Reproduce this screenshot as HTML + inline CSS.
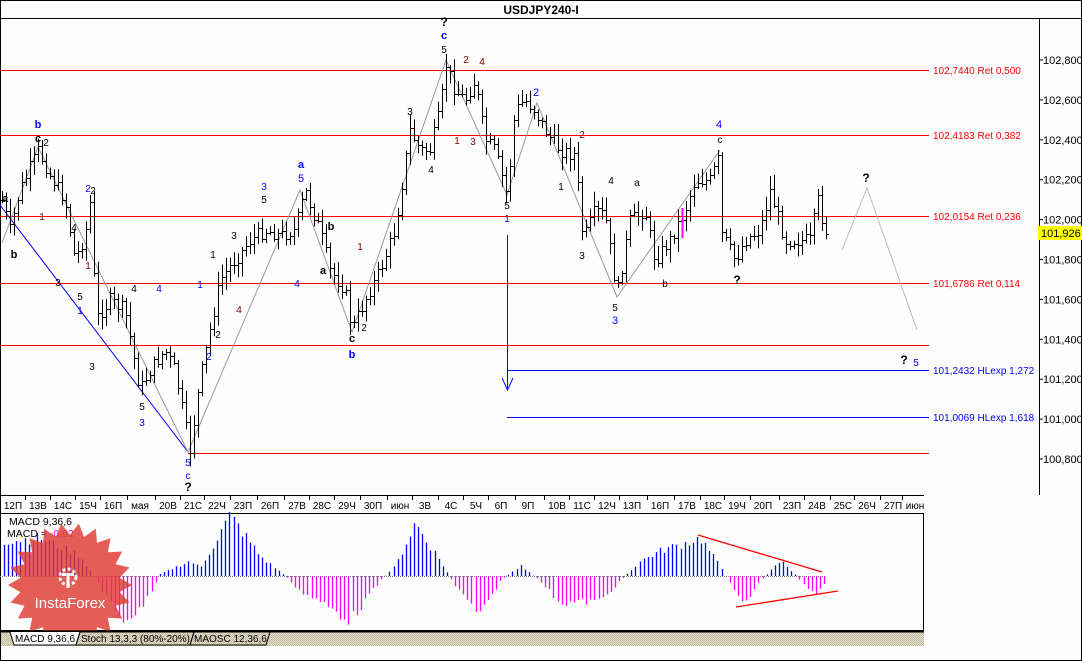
<!DOCTYPE html>
<html><head><meta charset="utf-8"><style>
html,body{margin:0;padding:0;background:#fff}
svg{display:block;font-family:"Liberation Sans","DejaVu Sans",sans-serif}
</style></head><body>
<svg id="s" width="1082" height="661" viewBox="0 0 1082 661" xmlns="http://www.w3.org/2000/svg">
<defs>
<pattern id="hatch" width="2" height="2" patternUnits="userSpaceOnUse"><rect width="2" height="2" fill="#e6e2d0"/><rect width="1" height="1" fill="#bdb89c"/><rect x="1" y="1" width="1" height="1" fill="#bdb89c"/></pattern>
</defs>
<rect x="0" y="0" width="1082" height="661" fill="#fcfdfc"/>
<rect x="0.5" y="0.5" width="1081" height="660" fill="none" stroke="#000"/>
<line x1="0" y1="18.5" x2="1082" y2="18.5" stroke="#000"/>
<text x="541" y="14" text-anchor="middle" font-size="12" font-weight="bold">USDJPY240-I</text>
<!-- price axis -->
<line x1="1039.5" y1="19" x2="1039.5" y2="495" stroke="#000"/>
<g id="axis" font-size="11"></g>
<rect x="1038" y="226" width="44" height="14" fill="#ffff00"/>
<text x="1041" y="237" font-size="11">101,926</text>
<!-- red fib lines -->
<g stroke="#ff0000" stroke-width="1">
<line x1="0" y1="70.5" x2="929" y2="70.5"/>
<line x1="0" y1="135.5" x2="929" y2="135.5"/>
<line x1="0" y1="216.5" x2="929" y2="216.5"/>
<line x1="0" y1="283.5" x2="929" y2="283.5"/>
<line x1="0" y1="345.5" x2="929" y2="345.5"/>
<line x1="188" y1="453.5" x2="929" y2="453.5"/>
</g>
<g fill="#ff0000" font-size="10">
<text x="933" y="74">102,7440 Ret 0,500</text>
<text x="933" y="139">102,4183 Ret 0,382</text>
<text x="933" y="220">102,0154 Ret 0,236</text>
<text x="933" y="287">101,6786 Ret 0,114</text>
</g>
<g stroke="#0000ff"><line x1="507" y1="370.5" x2="929" y2="370.5"/><line x1="507" y1="417.5" x2="929" y2="417.5"/>
<line x1="507.5" y1="235" x2="507.5" y2="388"/><polyline points="502,378 507.5,390 513,378" fill="none"/>
<line x1="0" y1="205" x2="188" y2="452"/></g>
<g fill="#0000ff" font-size="10">
<text x="933" y="374">101,2432 HLexp 1,272</text>
<text x="933" y="421">101,0069 HLexp 1,618</text>
</g>
<!-- gray wave lines -->
<polyline points="2,243 38,147 188,452 300,190 352,332 446,60 507,195 537,103 617,297 720,150" fill="none" stroke="#999" stroke-width="1"/>
<polyline points="842,250 867,188 917,330" fill="none" stroke="#bbb" stroke-width="1"/>
<g id="bars" stroke="#000" stroke-width="1"></g>
<line x1="682.5" y1="208" x2="682.5" y2="238" stroke="#ff00ff" stroke-width="2"/>
<g id="labels" font-size="10"></g>
<!-- date axis -->
<line x1="0" y1="495.5" x2="924" y2="495.5" stroke="#000"/>
<g id="dates" font-size="10"></g>
<!-- MACD panel -->
<rect x="0.5" y="513.5" width="923" height="117" fill="#fcfdfc" stroke="#000"/>
<line x1="0" y1="576.5" x2="826" y2="576.5" stroke="#888" stroke-dasharray="1,1"/>
<g id="macd" stroke-width="1.3"></g>
<g stroke="#ff0000" stroke-width="1.3"><line x1="698" y1="535" x2="822" y2="572"/><line x1="736" y1="607" x2="838" y2="591"/></g>
<text x="9" y="525" font-size="10.5">MACD 9,36,6</text>
<text x="7" y="537" font-size="10.5">MACD = <tspan fill="#ff00ff">-0,02</tspan></text>
<!-- watermark -->
<g opacity="0.82">
<polygon id="star" fill="#e03a34"/>
<g fill="#fff" stroke="none">
<circle cx="68" cy="577" r="8" fill="none" stroke="#fff" stroke-width="3" stroke-dasharray="3,2.3"/>
<rect x="66.5" y="575" width="3" height="13"/>
<rect x="62" y="573" width="12" height="3"/>
</g>
<text x="70" y="608" text-anchor="middle" fill="#fff" font-size="15">InstaForex</text>
</g>
<!-- tabs -->
<rect x="1" y="631" width="923" height="15" fill="url(#hatch)"/>
<line x1="0" y1="631.5" x2="924" y2="631.5" stroke="#000" stroke-width="2"/>
<path d="M10,632 L14,645 L76,645 L80,632" fill="#fff" stroke="#000"/>
<path d="M80,632 L76,645 L190,645 L194,632" fill="none" stroke="#000"/>
<path d="M194,632 L190,645 L266,645 L270,632" fill="none" stroke="#000"/>
<g font-size="10"><text x="15" y="642">MACD 9,36,6</text><text x="81" y="642">Stoch 13,3,3 (80%-20%)</text><text x="194" y="642">MAOSC 12,36,6</text></g>
</svg>
<script>
var NS="http://www.w3.org/2000/svg";
function el(p,t,a,txt){var e=document.createElementNS(NS,t);for(var k in a)e.setAttribute(k,a[k]);if(txt!=null)e.textContent=txt;document.getElementById(p).appendChild(e);return e;}
// axis
var ax=["102,800","102,600","102,400","102,200","102,000","101,800","101,600","101,400","101,200","101,000","100,800"];
for(var i=0;i<ax.length;i++){var y=60+i*39.9;el("axis","line",{x1:1039,y1:y,x2:1043,y2:y,stroke:"#000"});el("axis","text",{x:1043,y:y+4},ax[i]);}
// bars
var wp=[[2,200],[10,230],[20,190],[38,150],[50,175],[65,200],[75,260],[85,235],[92,190],[95,320],[110,300],[125,310],[140,390],[150,370],[165,350],[175,370],[190,450],[200,380],[210,330],[220,280],[235,260],[250,240],[265,230],[280,235],[295,230],[305,190],[320,230],[330,270],[345,290],[352,330],[365,300],[380,270],[395,230],[410,130],[420,150],[430,150],[440,110],[446,65],[455,90],[465,100],[475,80],[485,140],[495,150],[507,195],[515,110],[525,100],[535,110],[545,130],[560,150],[575,155],[583,240],[595,210],[605,215],[617,295],[630,220],[645,210],[655,260],[670,240],[685,210],[695,180],[710,180],[718,160],[720,230],[735,260],[745,240],[760,230],[770,190],[785,240],[800,240],[810,240],[818,200],[825,230]];
function interp(w,x){for(var i=0;i<w.length-1;i++){if(x>=w[i][0]&&x<=w[i+1][0]){var t=(x-w[i][0])/(w[i+1][0]-w[i][0]);return w[i][1]+t*(w[i+1][1]-w[i][1]);}}return w[w.length-1][1];}
var seed=7;function rnd(){seed=(seed*9301+49297)%233280;return seed/233280;}
var prev=interp(wp,2);
for(var x=2;x<=826;x+=4){var c=interp(wp,x)+(rnd()-0.5)*14;var o=prev;var hi=Math.min(o,c)-2-rnd()*12;var lo=Math.max(o,c)+2+rnd()*12;
el("bars","line",{x1:x+.5,y1:hi,x2:x+.5,y2:lo});el("bars","line",{x1:x-2,y1:Math.round(o)+.5,x2:x+.5,y2:Math.round(o)+.5});el("bars","line",{x1:x+.5,y1:Math.round(c)+.5,x2:x+3,y2:Math.round(c)+.5});prev=c;}
// macd
var mw=[[4,35],[40,38],[80,20],[100,-10],[120,-44],[140,-35],[160,2],[190,15],[200,8],[230,60],[260,20],[285,0],[300,-15],[350,-44],[380,-5],[395,10],[415,53],[440,15],[455,-10],[480,-40],[500,-5],[520,10],[540,-5],[560,-27],[600,-25],[625,0],[640,15],[660,25],[700,38],[720,10],[728,-5],[745,-27],[760,-5],[770,5],[780,16],[795,2],[805,-10],[815,-17],[826,-5]];
for(var x=4;x<=826;x+=4.1){var v=interp(mw,x)*(0.85+rnd()*0.3);var xx=Math.round(x)+.5;el("macd","line",{x1:xx,y1:576,x2:xx,y2:576-v,stroke:v>0?"#0000ff":"#ff00ff"});}
// dates
var d=[["12П",13],["13В",38],["14С",63],["15Ч",88],["16П",113],["мая",140],["20В",168],["21С",193],["22Ч",217],["23П",243],["26П",270],["27В",297],["28С",322],["29Ч",347],["30П",373],["июн",400],["3В",425],["4С",451],["5Ч",476],["6П",501],["9П",528],["10В",557],["11С",582],["12Ч",607],["13П",632],["16П",660],["17В",687],["18С",713],["19Ч",737],["20П",763],["23П",792],["24В",817],["25С",843],["26Ч",867],["27П",893],["июн",915]];
for(var i=0;i<d.length;i++){el("dates","text",{x:d[i][1],y:509,"text-anchor":"middle"},d[i][0]);el("dates","line",{x1:d[i][1]-12.5,y1:495,x2:d[i][1]-12.5,y2:500,stroke:"#000"});}
// labels
var B="#0000ff",K="#000",M="#800000";
var L=[[444,26,"?",K,1,12],[444,39,"c",B,1,11],[444,53,"5",K],[38,128,"b",B,1,11],[38,142,"c",K,1,11],[46,146,"2",K],[5,202,"a",K,1,11],[14,258,"b",K,1,11],[42,220,"1",M],[74,231,"4",K],[88,192,"2",B],[93,194,"2",K],[88,269,"1",M],[58,286,"3",K],[80,300,"5",K],[80,314,"1",B],[92,370,"3",K],[134,292,"4",K],[159,292,"4",B],[142,410,"5",K],[142,426,"3",B],[188,466,"5",B],[188,479,"c",B],[188,491,"?",K,1,12],[200,288,"1",B],[213,258,"1",K],[218,338,"2",K],[209,360,"2",B],[239,313,"4",M],[234,239,"3",K],[264,190,"3",B],[264,203,"5",K],[301,168,"a",B,1,11],[301,182,"5",B,0,11],[297,287,"4",B],[331,230,"b",K,1,11],[323,274,"a",K,1,11],[360,250,"1",M],[364,331,"2",K],[352,342,"c",K,1,11],[352,358,"b",B,1,11],[410,115,"3",K],[431,173,"4",K],[466,63,"2",M],[482,65,"4",M],[457,144,"1",M],[473,145,"3",M],[507,209,"5",K],[507,222,"1",B],[536,96,"2",B,0,11],[561,190,"1",K],[582,138,"2",M],[582,259,"3",K],[611,184,"4",K],[637,186,"a",K],[615,311,"5",K],[615,324,"3",B,0,11],[665,287,"b",K],[719,128,"4",B,0,11],[720,143,"c",K],[737,284,"?",K,1,12],[866,182,"?",K,1,12],[904,364,"?",K,1,12],[916,366,"5",B]];
for(var i=0;i<L.length;i++){var l=L[i];el("labels","text",{x:l[0],y:l[1],fill:l[3],"text-anchor":"middle","font-weight":l[4]?"bold":"normal","font-size":l[5]||10},l[2]);}
// star
var pts=[],cx=70,cy=585,n=22;for(var i=0;i<n*2;i++){var r=i%2?50:62;var a=Math.PI*i/n;pts.push((cx+r*Math.cos(a)).toFixed(1)+","+(cy+r*Math.sin(a)).toFixed(1));}
document.getElementById("star").setAttribute("points",pts.join(" "));
</script>
</body></html>
